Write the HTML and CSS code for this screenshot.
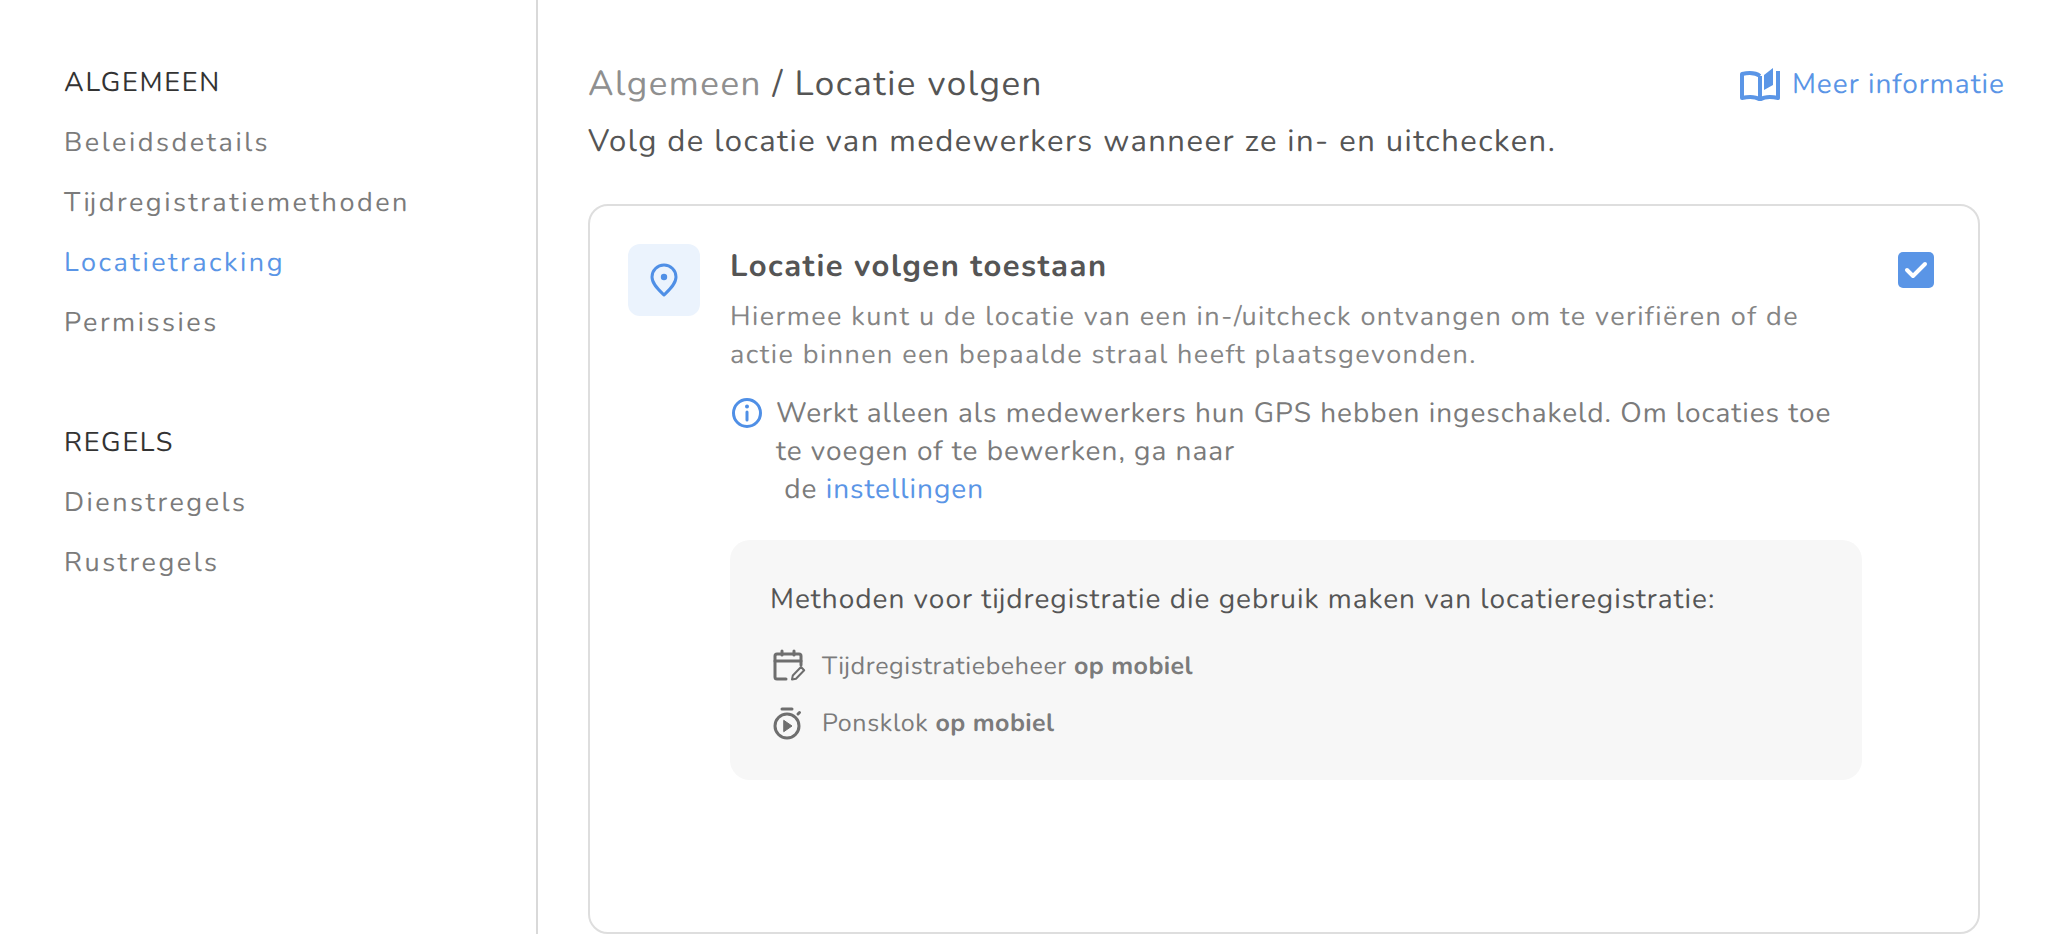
FILE: index.html
```html
<!DOCTYPE html>
<html lang="nl">
<head>
	<meta charset="UTF-8">
	<title>Locatie volgen</title>
	<link rel="stylesheet" href="styles.css">
</head>
<body>
	<nav class="side_nav">
		<div class="nav_title">ALGEMEEN</div>
		<a class="nav_item">Beleidsdetails</a>
		<a class="nav_item">Tijdregistratiemethoden</a>
		<a class="nav_item active">Locatietracking</a>
		<a class="nav_item">Permissies</a>
		<div class="nav_title second">REGELS</div>
		<a class="nav_item">Dienstregels</a>
		<a class="nav_item">Rustregels</a>
	</nav>
	<main class="content">
		<div class="head_row">
			<div class="crumb"><span class="crumb_parent">Algemeen</span> / Locatie volgen</div>
			<a class="more_link">
				<svg width="40" height="34" viewBox="0 0 40 34" fill="none" stroke="#5a95e6" stroke-width="4" stroke-linejoin="round"><path d="M20 9C16 6 9 5.500 2 7v24c7-1.500 14-1 18 1.500 4-2.500 11-3 18-1.500V4"/><path d="M20 9v23"/><path d="M24 8l9-7v17l-9 5z" fill="#5a95e6" stroke="none"/></svg>
				Meer informatie
			</a>
		</div>
		<p class="sub">Volg de locatie van medewerkers wanneer ze in- en uitchecken.</p>
		<section class="card">
			<div class="icon_box">
				<svg width="28" height="34" viewBox="0 0 28 34" fill="none" stroke="#4f8fe6" stroke-width="3"><path d="M14 32C9 27 2 21 2 14a12 12 0 0 1 24 0c0 7-7 13-12 18z" stroke-linejoin="round"/><circle cx="14" cy="14" r="3.200" fill="#4f8fe6" stroke="none"/></svg>
			</div>
			<div class="card_body">
				<h2>Locatie volgen toestaan</h2>
				<p class="desc">Hiermee kunt u de locatie van een in-/uitcheck ontvangen om te verifiëren of de actie binnen een bepaalde straal heeft plaatsgevonden.</p>
				<div class="note">
					<svg class="note_icon" width="34" height="34" viewBox="0 0 34 34" fill="none" stroke="#4f8fe6" stroke-width="3"><circle cx="17" cy="17" r="13.500"/><path d="M17 16v8" stroke-linecap="round"/><circle cx="17" cy="10.500" r="2" fill="#4f8fe6" stroke="none"/></svg>
					<div class="note_text">Werkt alleen als medewerkers hun GPS hebben ingeschakeld. Om locaties toe te voegen of te bewerken, ga naar<br>&nbsp;de <a class="link">instellingen</a></div>
				</div>
				<div class="methods">
					<div class="methods_title">Methoden voor tijdregistratie die gebruik maken van locatieregistratie:</div>
					<div class="method">
						<svg width="34" height="34" viewBox="0 0 34 34" fill="none" stroke="#6e6e6e" stroke-width="3" stroke-linecap="round"><path d="M14 30H5a2 2 0 0 1-2-2V7a2 2 0 0 1 2-2h22a2 2 0 0 1 2 2v9"/><path d="M3 12h26M10 2v4M22 2v4"/><path d="M20 30.500l.8-4 8.200-8.500 3.200 3.200-8.200 8.500z" stroke-width="2" stroke-linejoin="round"/></svg>
						<span>Tijdregistratiebeheer <b>op mobiel</b></span>
					</div>
					<div class="method">
						<svg width="34" height="34" viewBox="0 0 34 34" fill="none" stroke="#6e6e6e" stroke-width="3" stroke-linecap="round"><circle cx="15" cy="20" r="12"/><path d="M10 3h10M26 8l1.500-1.500"/><path d="M12 14.500l8 5.500-8 5.500z" fill="#6e6e6e" stroke-width="1"/></svg>
						<span>Ponsklok <b>op mobiel</b></span>
					</div>
				</div>
			</div>
			<div class="check">
				<svg width="24" height="18" viewBox="0 0 24 18" fill="none" stroke="#fff" stroke-width="4" stroke-linecap="round" stroke-linejoin="round"><path d="M3 9l6 6L21 3"/></svg>
			</div>
		</section>
	</main>
</body>
</html>
```
FILE: styles.css
```css
*{box-sizing: border-box;}
html,body{margin:0;height:100%;overflow: hidden;}
body{display:flex;background:#fff;font-family:"Nunito","Noto Sans","Open Sans",sans-serif;color:#555;letter-spacing:1px;text-rendering:geometricPrecision;}
.side_nav{width:538px;flex:none;border-right:2px solid #d9d9d9;padding:65px 0 0 64px;}
.nav_title{font-size:27px;line-height:36px;color:#333;margin-bottom:24px;letter-spacing:1.7px;}
.nav_title.second{margin-top:84px;}
.nav_item{display:block;font-size:27px;line-height:36px;color:#7b7b7b;margin-bottom:24px;letter-spacing:2.52px;}
.nav_item.active{color:#5a95e6;}
.content{flex:1;padding:60px 0 0 50px;min-width:0;}
.head_row{display:flex;justify-content:space-between;align-items:center;height:48px;padding-right:61px;}
.crumb{font-size:35px;letter-spacing:1.5px;}
.crumb_parent{color:#8f8f8f;}
.more_link{display:flex;align-items:center;gap:12px;font-size:28px;color:#5a95e6;letter-spacing:1px;}
.sub{margin:11px 0 0;font-size:31px;line-height:44px;letter-spacing:1.47px;}
.card{display:flex;width:1392px;height:730px;margin-top:41px;border:2px solid #dedede;border-radius:20px;padding:38px 44px 0 38px;}
.icon_box{width:72px;height:72px;flex:none;background:#ebf3fd;border-radius:12px;display:flex;align-items:center;justify-content:center;}
.card_body{width:1162px;flex:none;padding-left:30px;}
.card_body h2{margin:1px 0 0;font-size:31px;line-height:42px;color:#555;font-weight:700;letter-spacing:1.5px;}
.desc{margin:11px 0 0;padding-right:40px;font-size:27px;line-height:38px;color:#858585;letter-spacing:1.45px;}
.note{display:flex;gap:12px;margin-top:20px;padding-right:20px;font-size:28px;line-height:38px;color:#7b7b7b;}
.note_icon{flex:none;margin-top:2px;}
.link{color:#5a95e6;}
.methods{margin-top:32px;background:#f7f7f7;border-radius:20px;padding:40px;height:240px;}
.methods_title{font-size:28px;line-height:38px;color:#555;margin-bottom:29px;}
.method{display:flex;align-items:center;gap:16px;margin-top:19px;font-size:25px;line-height:38px;color:#7b7b7b;letter-spacing:.6px;}
.method svg{margin-left:2px;}
.method b{letter-spacing:.4px;}
.check{width:36px;height:36px;flex:none;margin:8px 0 0 auto;background:#5a95e6;border-radius:5px;display:flex;align-items:center;justify-content:center;}
```
